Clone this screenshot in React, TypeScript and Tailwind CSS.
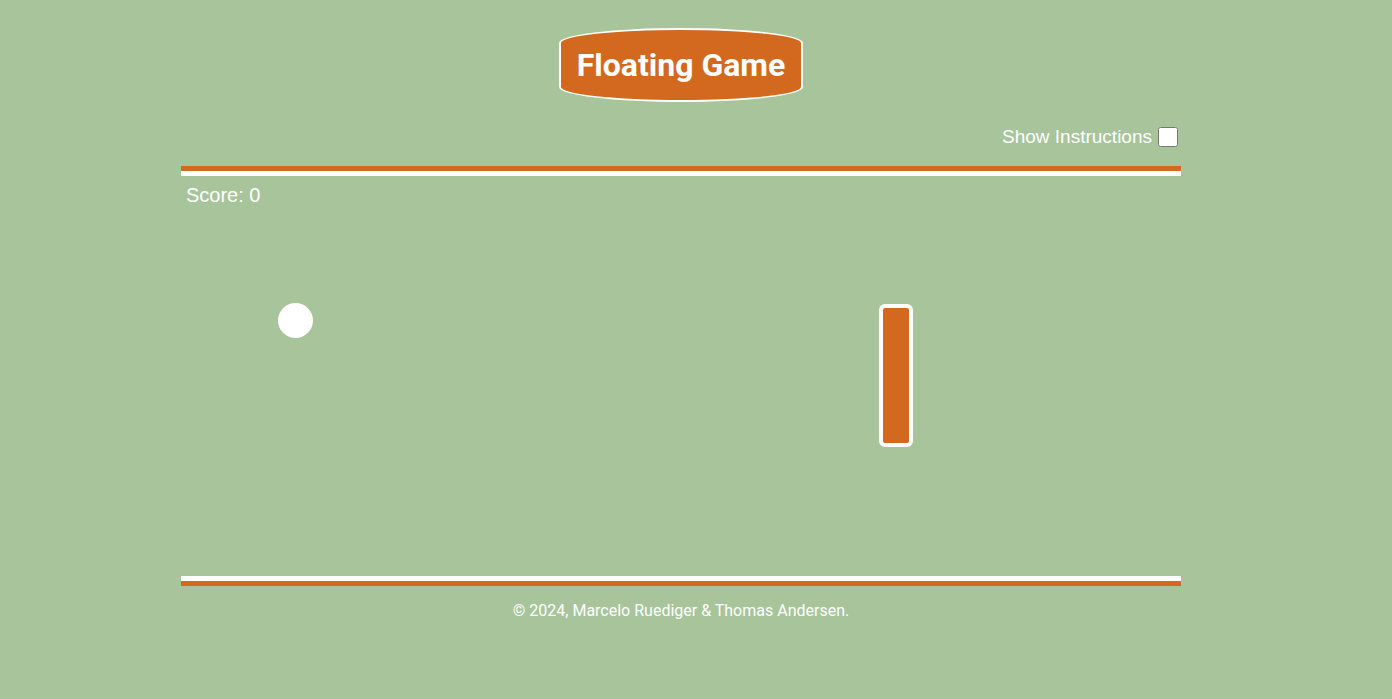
import { useState } from 'react';

export default function App() {
  const [showInstructions, setShowInstructions] = useState(false);

  return (
    <div className="min-h-screen w-full bg-[#a7c49b] text-white font-['Roboto',sans-serif]">
      <div className="ml-[181px] flex w-[1000px] flex-col">
        {/* title */}
        <div className="mt-[28px] flex justify-center">
          <h1 className="flex h-[74px] w-[244px] items-center justify-center rounded-[50%_/_15px] border-2 border-white bg-[#d2691e] text-[32px] font-bold leading-none">
            Floating Game
          </h1>
        </div>

        <div className="mt-[22px] flex h-[26px] items-center justify-end">
          <label className="flex items-center font-['Liberation_Sans',Arial,sans-serif] text-[19px] leading-[22px]">
            Show Instructions
            <input
              type="checkbox"
              checked={showInstructions}
              onChange={(e) => setShowInstructions(e.target.checked)}
              className="my-[3px] ml-[6px] mr-[3px] h-[20px] w-[20px]"
            />
          </label>
        </div>

        {/* game board */}
        <div className="mt-[16px]">
          <div className="h-[5px] bg-[#d2691e]" />
          <div className="h-[5px] bg-white" />
          <div className="relative h-[400px] px-[5px] pt-[4px] font-['Liberation_Sans',Arial,sans-serif] text-[20px]">
            <div>Score: 0</div>
            <div className="absolute left-[97px] top-[127px] h-[35px] w-[35px] rounded-full bg-white" />
            <div className="absolute left-[698px] top-[128px] h-[143px] w-[34px] rounded-[6px] border-4 border-white bg-[#d2691e]" />
          </div>
          <div className="h-[5px] bg-white" />
          <div className="h-[5px] bg-[#d2691e]" />
        </div>

        <footer className="mt-[13px] text-center text-[16px] leading-6">
          © 2024, Marcelo Ruediger &amp; Thomas Andersen.
        </footer>
      </div>
    </div>
  );
}
